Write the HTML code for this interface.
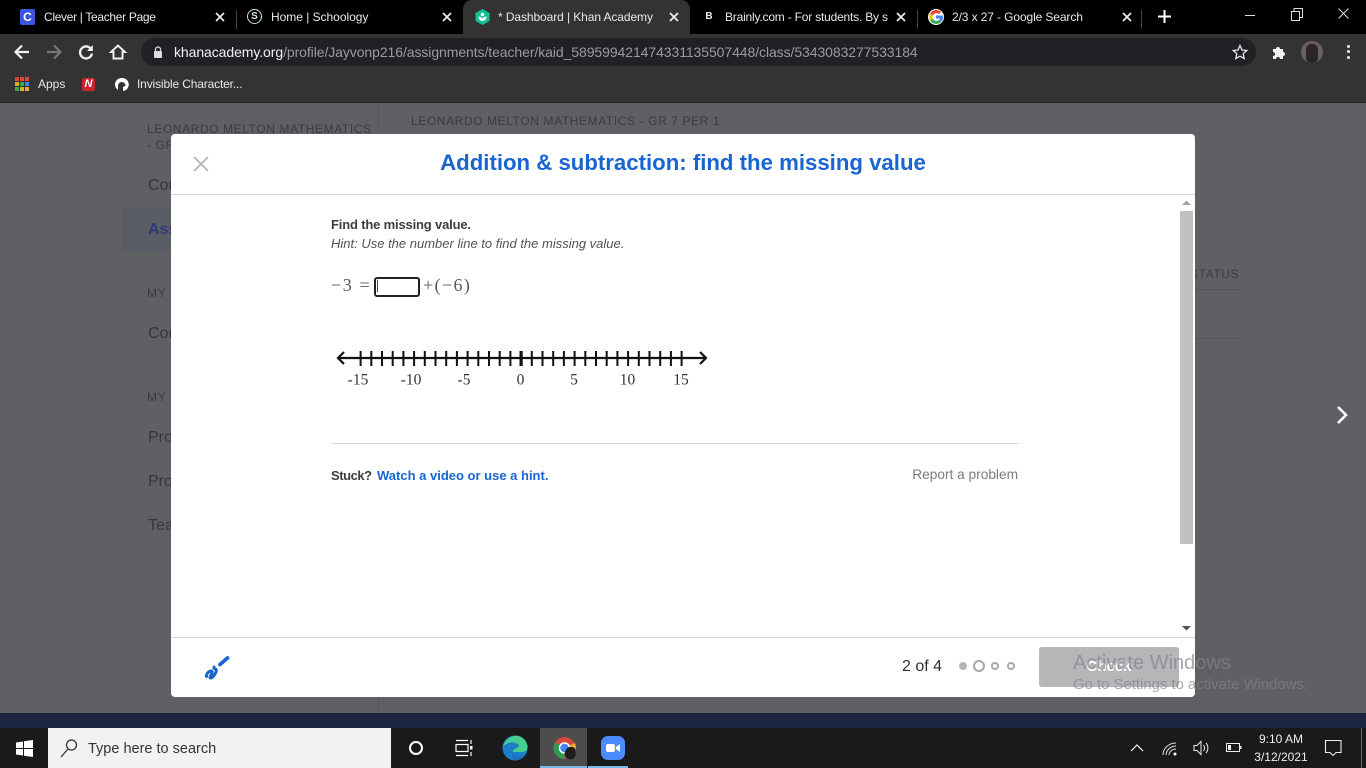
<!DOCTYPE html>
<html><head><meta charset="utf-8"><title>Dashboard</title>
<style>
html,body{margin:0;padding:0;width:1366px;height:768px;overflow:hidden;background:#5f6064;font-family:"Liberation Sans",sans-serif}
div,span{position:absolute;white-space:nowrap}
svg{position:absolute;overflow:visible}
.t{font-size:12px;letter-spacing:-.1px;color:#e8e8e8;top:9px;line-height:16px}
.bg{color:#35363b;font-size:16px;line-height:20px}
.sm{color:#3a3b40;font-size:12px;letter-spacing:.6px;line-height:16px}
</style></head><body>

<!-- Dimmed page -->
<div style="left:0;top:102px;width:1366px;height:611px;background:#5f6064"></div>
<div style="left:122px;top:208px;width:256px;height:44px;background:#5b5d66"></div>
<div style="left:378px;top:103px;width:1px;height:610px;background:#57585c"></div>
<div class="sm" style="left:147px;top:121px">LEONARDO MELTON MATHEMATICS</div>
<div class="sm" style="left:147px;top:137px">- GR</div>
<div class="sm" style="left:411px;top:113px">LEONARDO MELTON MATHEMATICS - GR 7 PER 1</div>
<div class="bg" style="left:148px;top:176px">Cou</div>
<div class="bg" style="left:148px;top:220px;color:#2b3a78;font-weight:bold">Ass</div>
<div class="sm" style="left:147px;top:285px">MY</div>
<div class="bg" style="left:148px;top:324px">Cou</div>
<div class="sm" style="left:147px;top:389px">MY</div>
<div class="bg" style="left:148px;top:428px">Pro</div>
<div class="bg" style="left:148px;top:472px">Pro</div>
<div class="bg" style="left:148px;top:516px">Tea</div>
<div class="sm" style="left:1190px;top:266px">STATUS</div>
<div style="left:1195px;top:289px;width:45px;height:1px;background:#56575b"></div>
<div style="left:1195px;top:338px;width:45px;height:1px;background:#56575b"></div>
<svg style="left:1334px;top:404px" width="16" height="22" viewBox="0 0 16 22"><path d="M4 3l8 8-8 8" fill="none" stroke="#fff" stroke-width="2.600"/></svg>

<!-- Modal -->
<div style="left:171px;top:134px;width:1024px;height:563px;background:#fff;border-radius:4px"></div>
<div style="left:171px;top:194px;width:1024px;height:1px;background:#d8d8da"></div>
<div style="left:171px;top:637px;width:1024px;height:1px;background:#d8d8da"></div>
<svg style="left:193px;top:156px" width="16" height="16" viewBox="0 0 16 16"><path d="M1 1l14 14M15 1L1 15" stroke="#b5b5b7" stroke-width="1.800" fill="none"/></svg>
<div style="left:171px;top:148px;width:1024px;text-align:center;font-size:22.200px;line-height:30px;font-weight:bold;color:#1865d2">Addition &amp; subtraction: find the missing value</div>

<!-- Scrollbar -->
<div style="left:1179px;top:195px;width:16px;height:442px;background:#fff"></div>
<div style="left:1180px;top:211px;width:13px;height:333px;background:#c1c1c1"></div>
<svg style="left:1182px;top:200px" width="9" height="6"><path d="M0 5l4.500-4.500L9 5z" fill="#a3a3a3"/></svg>
<svg style="left:1182px;top:625px" width="9" height="6"><path d="M0 1l4.500 4.500L9 1z" fill="#505050"/></svg>

<!-- Content -->
<div style="left:331px;top:217px;font-size:13px;letter-spacing:-.17px;line-height:16px;font-weight:bold;color:#3b3e40">Find the missing value.</div>
<div style="left:331px;top:236px;font-size:13px;line-height:16px;font-style:italic;color:#505356">Hint: Use the number line to find the missing value.</div>
<div style="left:331px;top:275px;font-family:'Liberation Serif',serif;font-size:18px;letter-spacing:1.600px;line-height:20px;color:#55585a">−3 =</div>
<div style="left:374px;top:277px;width:42px;height:16px;border:2px solid #222;border-radius:3px;background:#fff"></div>
<div style="left:377px;top:280px;width:1px;height:12px;background:#444"></div>
<div style="left:423px;top:275px;font-family:'Liberation Serif',serif;font-size:18px;letter-spacing:1.400px;line-height:20px;color:#55585a">+(−6)</div>

<svg style="left:0;top:0" width="1366" height="768">
<path d="M338 358H706" stroke="#111" stroke-width="2.200" fill="none"/>
<path d="M344 352l-6 6 6 6M700 352l6 6-6 6" stroke="#111" stroke-width="2.200" fill="none"/>
<line x1="359.600" y1="358.500" x2="683" y2="358.500" stroke="#111" stroke-width="15" stroke-dasharray="2 8.700"/>
<rect x="519.500" y="351" width="3.200" height="15" fill="#111"/>
<g font-family="Liberation Serif,serif" font-size="15.500" fill="#333" text-anchor="middle">
<text x="358" y="384.500">-15</text><text x="411" y="384.500">-10</text><text x="464" y="384.500">-5</text><text x="520.500" y="384.500">0</text><text x="574" y="384.500">5</text><text x="627.500" y="384.500">10</text><text x="681" y="384.500">15</text>
</g></svg>

<div style="left:331px;top:443px;width:688px;height:1px;background:#d8d8da"></div>
<div style="left:331px;top:468px;font-size:13px;letter-spacing:-.45px;line-height:16px;font-weight:bold;color:#3b3e40">Stuck?</div>
<div style="left:377px;top:468px;font-size:13px;line-height:16px;font-weight:bold;color:#1865d2">Watch a video or use a hint.</div>
<div style="right:348px;top:467px;font-size:13.700px;line-height:16px;color:#7a7c7f">Report a problem</div>

<!-- Modal footer -->
<svg style="left:203px;top:654px" width="28" height="28" viewBox="0 0 28 28"><path d="M3.500 22.500C3 19 8 15.500 9 17.500 10 19.500 5.500 23.500 7.500 24 9.500 24.500 14.500 17.500 13 15.500 12 14 10.500 15.500 11 13" fill="none" stroke="#1865d2" stroke-width="3" stroke-linecap="round" stroke-linejoin="round"/><path d="M17 10.500L24.500 4" stroke="#1865d2" stroke-width="3.800" stroke-linecap="round"/></svg>
<div style="left:902px;top:658px;font-size:16px;line-height:18px;color:#2d2f31">2 of 4</div>
<div style="left:959px;top:662px;width:8px;height:8px;border-radius:50%;background:#b5b5b7"></div>
<div style="left:973px;top:660px;width:8px;height:8px;border-radius:50%;border:2px solid #a8a8aa"></div>
<div style="left:991px;top:662px;width:4px;height:4px;border-radius:50%;border:2px solid #a8a8aa"></div>
<div style="left:1007px;top:662px;width:4px;height:4px;border-radius:50%;border:2px solid #a8a8aa"></div>
<div style="left:1039px;top:647px;width:140px;height:40px;border-radius:3px;background:#b5b6b8"></div>
<div style="left:1039px;top:658px;width:140px;text-align:center;font-size:15px;line-height:18px;font-weight:bold;color:#fff">Check</div>
<div style="left:1073px;top:651px;font-size:20px;line-height:24px;color:rgba(130,131,135,.7)">Activate Windows</div>
<div style="left:1073px;top:676px;font-size:14.900px;line-height:18px;color:rgba(130,131,135,.7)">Go to Settings to activate Windows.</div>

<!-- Navy strip + taskbar -->
<div style="left:0;top:713px;width:1366px;height:15px;background:#1b2440"></div>
<div style="left:0;top:728px;width:1366px;height:40px;background:#1a1a1b"></div>
<svg style="left:16px;top:740px" width="17" height="17" viewBox="0 0 17 17"><path d="M0 2.500l7-1v6.500H0zM8 1.300l9-1.300v8H8zM0 9h7v6.500l-7-1zM8 9h9v8l-9-1.300z" fill="#fff"/></svg>
<div style="left:48px;top:728px;width:343px;height:40px;background:#f2f2f2"></div>
<svg style="left:59px;top:738px" width="20" height="20" viewBox="0 0 20 20"><circle cx="12.500" cy="7" r="5" fill="none" stroke="#333" stroke-width="1.300"/><path d="M9 11l-7 8" stroke="#333" stroke-width="1.300"/></svg>
<div style="left:88px;top:740px;font-size:14.500px;line-height:18px;color:#333">Type here to search</div>
<div style="left:409px;top:741px;width:10px;height:10px;border:2px solid #fff;border-radius:50%"></div>
<svg style="left:455px;top:739px" width="18" height="18" viewBox="0 0 18 18"><path d="M1 1.500h12M1 16.500h12M1 5.500h12v7H1z" fill="none" stroke="#fff" stroke-width="1.200"/><path d="M16 1v4M16 13v4" stroke="#fff" stroke-width="1.200"/><rect x="15" y="7" width="2.500" height="3.500" fill="#fff"/></svg>
<svg style="left:502px;top:735px" width="26" height="26" viewBox="0 0 26 26"><circle cx="13" cy="13" r="12.500" fill="#1a7ec9"/><path d="M1 12C3 3 11 .5 15 .8 22 1.500 26 8 25.500 13c-.2 3-3.500 4.500-7 4H11c0-4 6-4 6-6C16 7 6 5 1 12z" fill="#45cf8f"/><path d="M11 17c0 4 6 6 11 3.500-2 3-6 5-9 5-3 0-3-5-2-8.500z" fill="#1f6fc0"/></svg>
<div style="left:540px;top:728px;width:47px;height:40px;background:#4d4d4d"></div>
<div style="left:540px;top:766px;width:47px;height:2px;background:#76b9ed"></div>
<div style="left:588px;top:766px;width:40px;height:2px;background:#76b9ed"></div>
<svg style="left:553px;top:736px" width="24" height="24" viewBox="0 0 24 24"><circle cx="11.500" cy="12" r="11" fill="#d6493a"/><path d="M11.500 12L22 7A11 11 0 0 1 17 21z" fill="#eeb12c"/><path d="M11.500 12L11.500 23A11 11 0 0 1 2 6.500z" fill="#339a53"/><circle cx="11.500" cy="12" r="5" fill="#4285f4" stroke="#fff" stroke-width="1.500"/><path d="M13 14c1-4 8-4 9-1s1 9-2 10-7 0-8-3 0-4 1-6z" fill="#201c1e"/></svg>
<svg style="left:601px;top:736px" width="24" height="24" viewBox="0 0 24 24"><rect x="0" y="0" width="24" height="24" rx="7" fill="#4a8cff"/><rect x="5" y="8" width="9" height="8" rx="2" fill="#fff"/><path d="M15 11l4-3v8l-4-3z" fill="#fff"/></svg>
<svg style="left:1130px;top:743px" width="14" height="9"><path d="M1 8l6-6 6 6" fill="none" stroke="#fff" stroke-width="1.200"/></svg>
<svg style="left:1162px;top:741px" width="16" height="16" viewBox="0 0 16 16"><path d="M1 14C1 8 6 2 14 2M4 14c0-4 4-9 10-9M7 14c0-3 3-6 7-6" fill="none" stroke="#ddd" stroke-width="1"/><circle cx="13" cy="13" r="1.500" fill="#fff"/></svg>
<svg style="left:1193px;top:740px" width="17" height="16" viewBox="0 0 17 16"><path d="M1 5.500h3l4-4v13l-4-4H1zM10.500 5c1.500 2 1.500 4 0 6M13 3c2.500 3 2.500 7 0 10" fill="none" stroke="#eee" stroke-width="1"/></svg>
<svg style="left:1226px;top:743px" width="16" height="10" viewBox="0 0 16 10"><rect x=".5" y=".5" width="13" height="8" fill="none" stroke="#eee"/><rect x="2" y="2" width="3" height="5" fill="#eee"/><rect x="14" y="3" width="1.500" height="3" fill="#eee"/></svg>
<div style="left:1246px;top:731px;width:70px;text-align:center;font-size:12px;line-height:16px;color:#eee">9:10 AM</div>
<div style="left:1246px;top:749px;width:70px;text-align:center;font-size:12px;line-height:16px;color:#eee">3/12/2021</div>
<svg style="left:1325px;top:740px" width="17" height="17" viewBox="0 0 17 17"><path d="M.5.500h15.500v12h-5l-3 3-3-3H.500z" fill="none" stroke="#eee" stroke-width="1.100"/></svg>
<div style="left:1361px;top:728px;width:1px;height:40px;background:#666"></div>

<!-- Chrome: tab strip -->
<div style="left:0;top:0;width:1366px;height:34px;background:#000"></div>
<div style="left:463px;top:0;width:227px;height:34px;background:#333;border-radius:9px 9px 0 0"></div>
<div style="left:236px;top:10px;width:1px;height:19px;background:#444"></div>
<div style="left:917px;top:10px;width:1px;height:19px;background:#444"></div>
<div style="left:1141px;top:10px;width:1px;height:19px;background:#444"></div>

<div style="left:20px;top:9px;width:15px;height:16px;background:#3a54e0;border-radius:2px;color:#fff;font-size:12px;font-weight:bold;line-height:16px;text-align:center">C</div>
<div class="t" style="left:44px;letter-spacing:-.32px">Clever | Teacher Page</div>
<svg style="left:215px;top:12px" width="10" height="10"><path d="M1 1l8 8M9 1l-8 8" stroke="#eee" stroke-width="1.700"/></svg>

<div style="left:247px;top:9px;width:13px;height:13px;border:1.500px solid #cfe1ea;border-radius:50%;color:#cfe1ea;font-size:10px;font-weight:bold;line-height:13px;text-align:center">S</div>
<div class="t" style="left:271px;letter-spacing:-.03px">Home | Schoology</div>
<svg style="left:442px;top:12px" width="10" height="10"><path d="M1 1l8 8M9 1l-8 8" stroke="#eee" stroke-width="1.700"/></svg>

<svg style="left:475px;top:9px" width="15" height="16" viewBox="0 0 15 16"><path d="M7.500 0L14.500 4v8L7.500 16.000.5 12V4z" fill="#14bf96"/><circle cx="7.500" cy="5.500" r="1.800" fill="#fff"/><path d="M3.500 7.500c0 3 2 4.500 4 4.500s4-1.500 4-4.500c-2 0-3 1-4 2-1-1-2-2-4-2z" fill="#fff"/></svg>
<div class="t" style="left:498px;letter-spacing:-.09px">* Dashboard | Khan Academy</div>
<svg style="left:669px;top:12px" width="10" height="10"><path d="M1 1l8 8M9 1l-8 8" stroke="#eee" stroke-width="1.700"/></svg>

<div style="left:704px;top:9px;width:10px;font-size:10px;font-weight:bold;line-height:16px;color:#eee;text-align:center">B</div>
<div class="t" style="left:725px;width:164px;overflow:hidden;letter-spacing:-.2px">Brainly.com - For students. By s</div>
<svg style="left:896px;top:12px" width="10" height="10"><path d="M1 1l8 8M9 1l-8 8" stroke="#eee" stroke-width="1.700"/></svg>

<svg style="left:928px;top:9px" width="16" height="16" viewBox="0 0 16 16"><circle cx="8" cy="8" r="8" fill="#fff"/><path d="M8 1a7 7 0 0 1 5 2l-2 2a4 4 0 0 0-6.300 1.500L2.200 4.500A7 7 0 0 1 8 1z" fill="#ea4335"/><path d="M2.200 4.500l2.500 2a4 4 0 0 0 0 3l-2.500 2a7 7 0 0 1 0-7z" fill="#fbbc05"/><path d="M2.200 11.500l2.500-2A4 4 0 0 0 11 11l2.300 1.800A7 7 0 0 1 2.200 11.500z" fill="#34a853"/><path d="M15 8c0 2-.7 3.500-1.700 4.800L11 11a3.500 3.500 0 0 0 1-1.500H8v-3h6.800z" fill="#4285f4"/></svg>
<div class="t" style="left:952px;letter-spacing:-.11px">2/3 x 27 - Google Search</div>
<svg style="left:1122px;top:12px" width="10" height="10"><path d="M1 1l8 8M9 1l-8 8" stroke="#eee" stroke-width="1.700"/></svg>
<svg style="left:1158px;top:10px" width="13" height="13"><path d="M6.500 0v13M0 6.500h13" stroke="#fff" stroke-width="2"/></svg>

<div style="left:1245px;top:15px;width:10px;height:1px;background:#ddd"></div>
<svg style="left:1291px;top:8px" width="12" height="13"><path d="M.5 3.500h8v9h-8zM3 3.500V.500h8.500v9H8.500" fill="none" stroke="#ddd"/></svg>
<svg style="left:1338px;top:8px" width="11" height="11"><path d="M.5.500l10 10M10.500.500l-10 10" stroke="#ddd" stroke-width="1"/></svg>

<!-- Chrome: toolbar -->
<div style="left:0;top:34px;width:1366px;height:38px;background:#333"></div>
<div style="left:0;top:72px;width:1366px;height:30px;background:#333"></div>
<div style="left:0;top:102px;width:1366px;height:1px;background:#232323"></div>
<svg style="left:14px;top:44px" width="16" height="16"><path d="M15 8H2M8 1.500L1.500 8 8 14.500" fill="none" stroke="#f1f1f1" stroke-width="2.200"/></svg>
<svg style="left:46px;top:44px" width="16" height="16"><path d="M1 8h13M8 1.500L14.500 8 8 14.500" fill="none" stroke="#777" stroke-width="2.200"/></svg>
<svg style="left:78px;top:44px" width="16" height="16" viewBox="0 0 16 16"><path d="M13 5A6 6 0 1 0 14 9.500" fill="none" stroke="#f1f1f1" stroke-width="2.300"/><path d="M14.800 1v6H9z" fill="#f1f1f1"/></svg>
<svg style="left:110px;top:44px" width="16" height="16" viewBox="0 0 16 16"><path d="M8 1.500L1 8h2.500v6.500h9V8H15z" fill="none" stroke="#f1f1f1" stroke-width="1.900"/></svg>
<div style="left:141px;top:38px;width:1115px;height:28px;background:#202124;border-radius:14px"></div>
<svg style="left:153px;top:46px" width="10" height="12" viewBox="0 0 10 12"><path d="M2.500 5V3.500a2.500 2.500 0 0 1 5 0V5" fill="none" stroke="#ddd" stroke-width="1.200"/><rect x="1" y="5" width="8" height="7" rx="1" fill="#ddd"/></svg>
<div style="left:174px;top:44px;font-size:14px;letter-spacing:-.08px;line-height:16px;color:#9a9b9e"><span style="position:static;color:#f1f1f1">khanacademy.org</span>/profile/Jayvonp216/assignments/teacher/kaid_589599421474331135507448/class/5343083277533184</div>
<svg style="left:1232px;top:44px" width="16" height="16" viewBox="0 0 16 16"><path d="M8 1.500l2 4.500 4.800.5-3.600 3.200 1 4.800L8 12.200 3.800 14.500l1-4.800L1.200 6.500 6 6z" fill="none" stroke="#e8e8e8" stroke-width="1.300"/></svg>
<svg style="left:1272px;top:45px" width="15" height="15" viewBox="0 0 15 15"><path d="M1 4h3a2 2 0 0 1 4 0h3v3a2 2 0 0 1 0 4v3H8a2 2 0 0 0-4 0H1v-3a2 2 0 0 0 0-4z" fill="#f1f1f1"/></svg>
<div style="left:1301px;top:41px;width:22px;height:22px;border-radius:50%;background:#6a6060;overflow:hidden"><div style="left:5px;top:3px;width:12px;height:19px;background:#2b2526;border-radius:5px"></div></div>
<div style="left:1347px;top:45px;width:3px;height:3px;background:#eee;border-radius:50%"></div>
<div style="left:1347px;top:50px;width:3px;height:3px;background:#eee;border-radius:50%"></div>
<div style="left:1347px;top:56px;width:3px;height:3px;background:#eee;border-radius:50%"></div>

<!-- Bookmarks -->
<svg style="left:15px;top:77px" width="14" height="14"><g>
<rect x="0" y="0" width="4" height="4" fill="#d9483b"/><rect x="5" y="0" width="4" height="4" fill="#d9483b"/><rect x="10" y="0" width="4" height="4" fill="#d9483b"/>
<rect x="0" y="5" width="4" height="4" fill="#e5a92b"/><rect x="5" y="5" width="4" height="4" fill="#34a853"/><rect x="10" y="5" width="4" height="4" fill="#4285f4"/>
<rect x="0" y="10" width="4" height="4" fill="#34a853"/><rect x="5" y="10" width="4" height="4" fill="#e5a92b"/><rect x="10" y="10" width="4" height="4" fill="#e5a92b"/></g></svg>
<div class="t" style="left:38px;top:76px;letter-spacing:0">Apps</div>
<div style="left:82px;top:78px;width:13px;height:13px;background:#c8242b;color:#fff;font-size:11px;font-weight:bold;font-style:italic;line-height:13px;text-align:center;border-radius:2px">N</div>
<svg style="left:115px;top:78px" width="13" height="13" viewBox="0 0 13 13"><path d="M6.500 0a6.500 6.500 0 0 0-3.500 12V7.500a3.800 3.800 0 0 1 7.500-.5 3 3 0 0 1-2.500 2V13A6.500 6.500 0 0 0 6.500 0z" fill="#fff"/></svg>
<div class="t" style="left:137px;top:76px;letter-spacing:-.15px">Invisible Character...</div>

</body></html>
